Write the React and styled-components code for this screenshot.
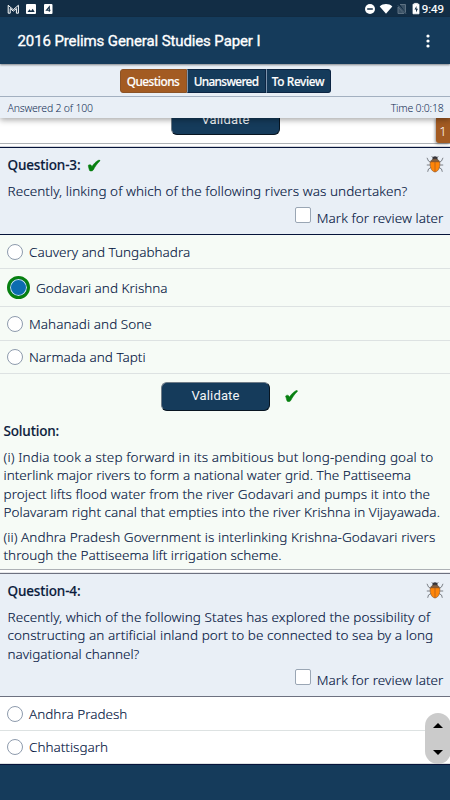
import React from 'react';
import styled, { createGlobalStyle } from 'styled-components';

const GlobalStyle = createGlobalStyle`
  * { box-sizing: border-box; }
  body {
    margin: 0;
    background: #fff;
    color: #04163f;
    font-family: "Noto Sans", "Open Sans", sans-serif;
    overflow: hidden;
  }
  p { margin: 0; }
`;

const Screen = styled.div`
  width: 450px;
  height: 800px;
  display: flex;
  flex-direction: column;
  position: relative;
  overflow: hidden;
`;

const StatusBar = styled.div`
  flex: none;
  height: 17px;
  background: #122d45;
  color: #fff;
  display: flex;
  justify-content: space-between;
  padding: 0 6px 0 7px;
  font: 400 11.5px/18px Roboto, sans-serif;
  -webkit-text-stroke: 0.2px #fff;
  svg { display: block; }
`;

const AppBar = styled.header`
  flex: none;
  height: 47px;
  background: #153b5b;
  color: #fff;
  display: flex;
  align-items: center;
  justify-content: space-between;
  padding: 0 20px 0 17.5px;
  box-shadow: 0 1px 2px rgba(0, 0, 0, 0.45);
  z-index: 3;
`;

const Title = styled.h1`
  margin: 1px 0 0;
  font: 400 15px/20px Roboto, sans-serif;
  letter-spacing: -0.11px;
  -webkit-text-stroke: 0.35px #fff;
  white-space: nowrap;
`;

const Toolbar = styled.div`
  flex: none;
  height: 54px;
  background: #e9eff6;
  box-shadow: 0 2px 6px rgba(0, 0, 0, 0.35);
  z-index: 2;
`;

const Tabs = styled.div`
  height: 33px;
  display: flex;
  justify-content: center;
  padding-top: 5px;
  border-bottom: 1px solid #a3b0c0;
`;

const Tab = styled.button`
  width: ${p => p.$w}px;
  height: 24px;
  padding: 0;
  border: 1px solid ${p => (p.$active ? '#8c5326' : '#0c2543')};
  border-left-color: ${p => (p.$active ? '#8c5326' : '#7d93ac')};
  border-radius: ${p => p.$radius || '0'};
  background: ${p => (p.$active ? '#a35b22' : '#153b5b')};
  color: #fff;
  font: 500 11.8px/20px "Noto Sans", sans-serif;
  letter-spacing: ${p => p.$ls}px;
  -webkit-text-stroke: 0.15px #fff;
  white-space: nowrap;
`;

const Progress = styled.div`
  display: flex;
  justify-content: space-between;
  padding: 0 6.5px 0 7.5px;
  font-size: 10.5px;
  font-weight: 300;
  line-height: 22px;
  letter-spacing: -0.2px;
  color: #0f2a52;
`;

const PrevEnd = styled.div`
  flex: none;
  height: 26px;
  display: flex;
  justify-content: flex-end;
  align-items: flex-start;
  border-bottom: 1px solid #adb1b5;
`;

const Validate = styled.button`
  width: 109px;
  height: 29px;
  padding: 0 0 1px;
  margin-top: ${p => p.$top || 0}px;
  margin-right: ${p => p.$right || 0}px;
  border: 1px solid;
  border-color: #6f7c88 #081521 #081521 #6f7c88;
  border-radius: 6px;
  background: #153b5b;
  color: #f3f5f8;
  font: 400 13px/20px Roboto, sans-serif;
  letter-spacing: 0.15px;
`;

const PageBadge = styled.div`
  width: 14px;
  height: 25px;
  background: #a35b22;
  color: #fff;
  border-radius: 0 0 0 3px;
  font-size: 13px;
  font-weight: 300;
  line-height: 26px;
  text-align: center;
  box-shadow: -1px 1px 3px rgba(0, 0, 0, 0.4);
`;

const Head = styled.section`
  flex: none;
  height: ${p => p.$h}px;
  margin-top: 3px;
  padding: 7px 6.5px 0 7.5px;
  display: flex;
  flex-direction: column;
  background: #e9eff6;
  border-top: 1px solid ${p => p.$line};
  border-bottom: 1px solid ${p => p.$line};
  box-shadow: 0 0 1px ${p => p.$line};
`;

const HeadTop = styled.div`
  height: 21px;
  display: flex;
  align-items: flex-start;
  svg { flex: none; }
`;

const Bold = styled.strong`
  display: block;
  font-weight: 500;
  font-size: 13.5px;
  line-height: 20px;
  letter-spacing: -0.15px;
  -webkit-text-stroke: 0.15px #0b1b3c;
  color: #0b1b3c;
`;

const Line = styled.span`
  display: block;
  font-size: 13.5px;
  font-weight: 300;
  line-height: ${p => p.$lh || 18.3}px;
  letter-spacing: ${p => p.$ls || 0}px;
  -webkit-text-stroke: 0.12px #04163f;
  white-space: nowrap;
`;

const Stem = styled.div`
  margin-top: 6px;
`;

const Review = styled.label`
  display: flex;
  justify-content: flex-end;
  gap: 6px;
  margin-top: ${p => p.$top || 0}px;
`;

const Check = styled.span`
  width: 16px;
  height: 16px;
  background: #fff;
  border: 1px solid #9aa6b4;
  border-radius: 2px;
`;

const Option = styled.div`
  flex: none;
  height: ${p => p.$h}px;
  padding: 1px 7px 0;
  display: flex;
  align-items: center;
  gap: 6px;
  background: ${p => (p.$plain ? '#fff' : '#f6fbf6')};
  border-bottom: 1px solid #dde2e2;
`;

const Radio = styled.span`
  flex: none;
  width: ${p => (p.$on ? 23 : 16)}px;
  height: ${p => (p.$on ? 23 : 16)}px;
  border-radius: 50%;
  border: ${p => (p.$on ? '3px solid #078010' : '1px solid #8e9bad')};
  background: ${p => (p.$on ? '#0c6cb0' : '#fff')};
  box-shadow: ${p => (p.$on ? 'inset 0 0 0 1px #cfe3ee' : 'none')};
  margin-top: -1px;
`;

const Answer = styled.section`
  flex: none;
  height: 196px;
  padding-left: 3.5px;
  background: #f6fbf6;
  border-bottom: 1px solid #adb1b5;
`;

const Actions = styled.div`
  height: 47px;
  display: flex;
  align-items: flex-start;
  padding: 8px 0 0 157.5px;
  gap: 14.5px;
  svg { margin-top: 8px; }
`;

const Para = styled.p`
  margin-top: 7px;
`;

const BottomBar = styled.footer`
  flex: none;
  height: 37px;
  background: #153b5b;
  border-top: 1px solid #07143a;
`;

const Scroller = styled.div`
  position: absolute;
  left: 425px;
  top: 713px;
  width: 26px;
  height: 51px;
  border-radius: 13px;
  background: #cbcbcb;
  display: flex;
  flex-direction: column;
  align-items: center;
  justify-content: space-between;
  padding: 10px 0 9px;
`;

const Spacer = styled.span`
  flex: 1;
`;

const Tick = () => (
  <svg width="13" height="12" viewBox="0 0 14 13">
    <path d="M.6 6.600C1.700 5.400 3.200 5.300 3.900 6.200l.9 1.500C6.700 4.600 9.200 2 12.300.5c.8-.3 1.700.5 1 1.100C10 4.800 7.900 8 6.200 11.400c-1 1.500-3.200 1.700-4 .6C1.500 10.500 1.300 8.300.6 6.600z" fill="#078010" stroke="#078010" strokeWidth=".6" />
  </svg>
);

const Beetle = () => (
  <svg width="18" height="18" viewBox="0 0 18 18">
    <g fill="none" stroke="#71757c" strokeWidth="0.9">
      <path d="M5 7.500 2.500 6 1 2.800M4.500 10H.8M5 12.500 2.500 14l-.8 2.800M13 7.500 15.500 6 17 2.800M13.500 10h3.700M13 12.500l2.500 1.500.8 2.800" />
    </g>
    <path d="M6 1.500 7.500 3M12 1.500 10.500 3" stroke="#333" fill="none" />
    <ellipse cx="9" cy="3.200" rx="2.400" ry="1.900" fill="#34343a" />
    <path d="M4.800 7C4.800 2.800 13.200 2.800 13.200 7z" fill="#87603f" stroke="#4c4038" strokeWidth=".6" />
    <path d="M4.300 6.800h9.400c.6 4.500-.8 9.700-4.700 10.200C5.100 16.500 3.700 11.300 4.300 6.800z" fill="#ff8508" stroke="#80502a" strokeWidth=".6" />
    <path d="M9 7v10" stroke="#a8591c" strokeWidth=".7" />
  </svg>
);

const Notifications = () => (
  <svg width="50" height="17" viewBox="7 0 50 17">
    <path d="M8.200 13.200V5.300l5.100 4.400 5.100-4.400v7.900h-2V8.500l-3.100 2.700-3.100-2.700v4.700z" fill="none" stroke="#fff" strokeWidth="1" />
    <rect x="26" y="4" width="10" height="10" rx="1" fill="#fff" />
    <path d="M27.500 12l2-2.700 1.500 1.700 1.700-2.300 2 3.300z" fill="#122d45" />
    <rect x="44" y="4" width="8.500" height="10" rx="1" fill="#fff" />
    <path d="M49.300 11.800V6.800L46.500 10.300h4" fill="none" stroke="#122d45" strokeWidth="1.100" />
  </svg>
);

const Signals = () => (
  <svg width="58" height="17" viewBox="363 0 58 17">
    <circle cx="369" cy="9" r="5" fill="#fff" />
    <path d="M366.200 9h5.600" stroke="#122d45" strokeWidth="1.500" />
    <path d="M378.700 6.400c3.500-3.200 9.100-3.200 12.600 0L385 13.700z" fill="#fff" />
    <path d="M397 5.500l8 8.200M399 4.500h5.500v8M397 7v6.500h6z" stroke="#5d7182" fill="#3a5165" strokeWidth="1" />
    <path d="M412 4.200h1.500V3.400h3v.8h1.500v9.600h-6z" fill="#fff" stroke="#fff" strokeWidth=".8" />
    <path d="M415.500 6l-2 3.500h1.500v3l2-3.700h-1.500z" fill="#122d45" />
  </svg>
);

const MenuDots = () => (
  <svg width="4" height="14" viewBox="0 0 4 14" fill="#fff">
    <circle cx="2" cy="2" r="1.600" />
    <circle cx="2" cy="7" r="1.600" />
    <circle cx="2" cy="12" r="1.600" />
  </svg>
);

const Arrow = ({ down }) => (
  <svg width="10" height="5" viewBox="0 0 10 5">
    <path d={down ? 'M0 0h10L5 5z' : 'M0 5h10L5 0z'} />
  </svg>
);

const QuestionHead = ({ label, done, lines, h, line, reviewTop }) => (
  <Head $h={h} $line={line}>
    <HeadTop>
      <Bold>{label}</Bold>
      {done && <svg width="22" height="20" viewBox="-7.500 -4.500 22 20"><Tick /></svg>}
      <Spacer />
      <Beetle />
    </HeadTop>
    <Stem>
      {lines.map(([text, ls]) => <Line key={text} $ls={ls}>{text}</Line>)}
    </Stem>
    <Review $top={reviewTop}>
      <Check />
      <Line $lh={22} $ls={0.06}>Mark for review later</Line>
    </Review>
  </Head>
);

const App = () => (
  <Screen>
    <GlobalStyle />
    <StatusBar>
      <Notifications />
      <Spacer />
      <Signals />
      <span>9:49</span>
    </StatusBar>
    <AppBar>
      <Title>2016 Prelims General Studies Paper I</Title>
      <MenuDots />
    </AppBar>
    <Toolbar>
      <Tabs>
        <Tab $active $w={67} $ls={-0.5} $radius="3px 0 0 3px">Questions</Tab>
        <Tab $w={79} $ls={-0.65}>Unanswered</Tab>
        <Tab $w={65} $ls={-0.35} $radius="0 3px 3px 0">To Review</Tab>
      </Tabs>
      <Progress>
        <span>Answered 2 of 100</span>
        <span>Time 0:0:18</span>
      </Progress>
    </Toolbar>
    <PrevEnd>
      <Validate $top={-12} $right={156}>Validate</Validate>
      <PageBadge>1</PageBadge>
    </PrevEnd>

    <QuestionHead
      label="Question-3:"
      done
      h={88}
      line="#06143a"
      reviewTop={7}
      lines={[['Recently, linking of which of the following rivers was undertaken?', 0.07]]}
    />
    <Option $h={34}><Radio /><Line>Cauvery and Tungabhadra</Line></Option>
    <Option $h={38}><Radio $on /><Line>Godavari and Krishna</Line></Option>
    <Option $h={34}><Radio /><Line $ls={0.05}>Mahanadi and Sone</Line></Option>
    <Option $h={33}><Radio /><Line>Narmada and Tapti</Line></Option>
    <Answer>
      <Actions>
        <Validate>Validate</Validate>
        <Tick />
      </Actions>
      <Bold>Solution:</Bold>
      <Para>
        <Line $ls={0.135}>(i) India took a step forward in its ambitious but long-pending goal to</Line>
        <Line $ls={0.02}>interlink major rivers to form a national water grid. The Pattiseema</Line>
        <Line $ls={0.07}>project lifts flood water from the river Godavari and pumps it into the</Line>
        <Line $ls={0.04}>Polavaram right canal that empties into the river Krishna in Vijayawada.</Line>
      </Para>
      <Para>
        <Line $ls={0.06}>(ii) Andhra Pradesh Government is interlinking Krishna-Godavari rivers</Line>
        <Line $ls={0.01}>through the Pattiseema lift irrigation scheme.</Line>
      </Para>
    </Answer>

    <QuestionHead
      label="Question-4:"
      h={124}
      line="#6d7180"
      reviewTop={6}
      lines={[
        ['Recently, which of the following States has explored the possibility of', 0.07],
        ['constructing an artificial inland port to be connected to sea by a long', 0.075],
        ['navigational channel?', 0],
      ]}
    />
    <Option $plain $h={34}><Radio /><Line>Andhra Pradesh</Line></Option>
    <Option $plain $h={33}><Radio /><Line>Chhattisgarh</Line></Option>
    <BottomBar />
    <Scroller><Arrow /><Arrow down /></Scroller>
  </Screen>
);

export default App;
